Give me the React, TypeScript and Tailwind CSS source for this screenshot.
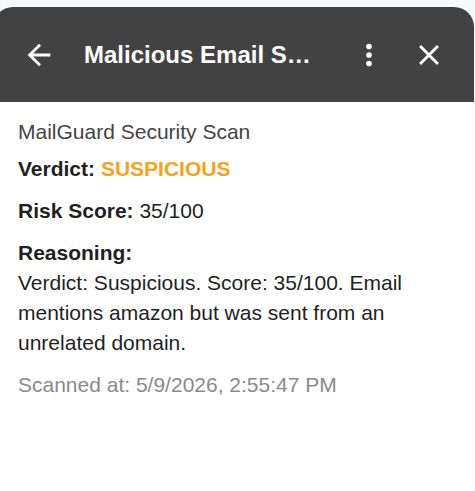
const font = { fontFamily: '"Liberation Sans", Arial, sans-serif' };

function BackIcon() {
  return (
    <svg viewBox="0 0 24 24" className="h-[34px] w-[34px] fill-white" aria-hidden="true">
      <path d="M20 11H7.83l5.59-5.59L12 4l-8 8 8 8 1.41-1.41L7.83 13H20v-2z" />
    </svg>
  );
}

function MoreIcon() {
  return (
    <svg viewBox="0 0 24 24" className="h-[34px] w-[34px] fill-white" aria-hidden="true">
      <circle cx="12" cy="6" r="2" />
      <circle cx="12" cy="12" r="2" />
      <circle cx="12" cy="18" r="2" />
    </svg>
  );
}

function CloseIcon() {
  return (
    <svg viewBox="0 0 24 24" className="h-[34px] w-[34px] fill-white" aria-hidden="true">
      <path d="M19 6.41 17.59 5 12 10.59 6.41 5 5 6.41 10.59 12 5 17.59 6.41 19 12 13.41 17.59 19 19 17.59 13.41 12z" />
    </svg>
  );
}

export default function App() {
  return (
    <div className="h-[491px] overflow-hidden bg-[#f8f9fd] pt-[7px]" style={font}>
      <div className="-ml-[7px] flex h-[484px] w-[481px] flex-col overflow-hidden rounded-t-[20px] bg-white">
        <header className="flex h-[95px] shrink-0 items-center bg-[#424242] pl-[29px] pr-[28px] text-white">
          <BackIcon />
          {/* title is truncated with an ellipsis, as in the panel */}
          <h1 className="ml-[28px] mr-[36px] min-w-0 flex-1 truncate text-[24px] font-bold leading-[30px]">
            Malicious Email Scan Result
          </h1>
          <MoreIcon />
          <span className="ml-[26px] flex">
            <CloseIcon />
          </span>
        </header>

        <main className="px-[25px] pt-[15px] text-[21px] leading-[30px] text-[#1f1f1f]">
          <p className="text-[#444444]">MailGuard Security Scan</p>
          <p className="mt-[7px]">
            <span className="font-bold">Verdict: </span>
            <span className="font-bold text-[#f5a31a]">SUSPICIOUS</span>
          </p>
          <p className="mt-3">
            <span className="font-bold">Risk Score:</span> 35/100
          </p>
          <div className="mt-3">
            <p className="font-bold">Reasoning:</p>
            <p>
              Verdict: Suspicious. Score: 35/100. Email mentions amazon but was sent from an unrelated
              domain.
            </p>
          </div>
          <p className="mt-3 text-[#8a8a8a]">Scanned at: 5/9/2026, 2:55:47 PM</p>
        </main>
      </div>
    </div>
  );
}
